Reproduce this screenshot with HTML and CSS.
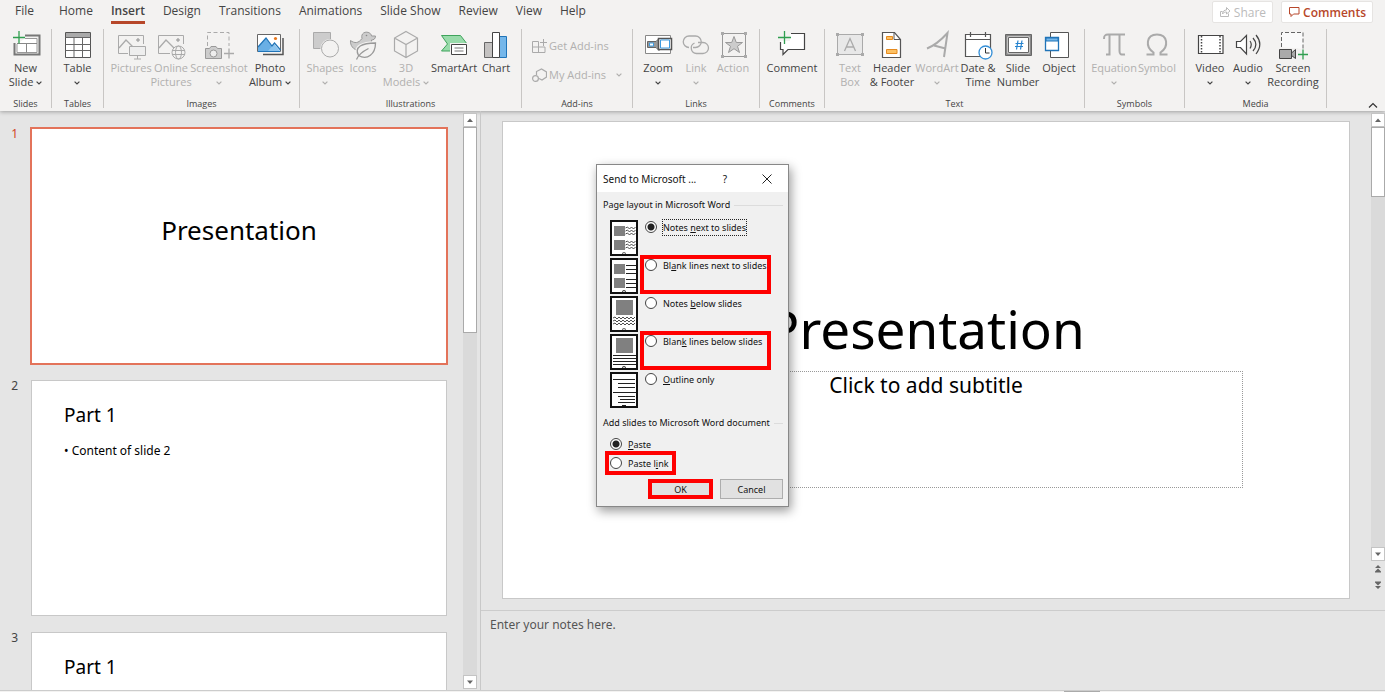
FILE: index.html
```html
<!DOCTYPE html>
<html lang="en">
<head>
<meta charset="utf-8">
<title>Presentation</title>
<link rel="stylesheet" href="styles.css">
</head>
<body>
<svg class="defs" aria-hidden="true">
  <symbol id="chev" viewBox="0 0 6 4"><path d="M.6.6 3 3 5.4.6" fill="none" stroke="currentColor" stroke-width="1.2"/></symbol>
  <symbol id="up" viewBox="0 0 8 8"><path d="M1 6h6L4 2.500z" fill="#666"/></symbol>
  <symbol id="down" viewBox="0 0 8 8"><path d="M1 2.500h6L4 6z" fill="#666"/></symbol>
</svg>

<header class="ribbon">
  <nav class="tabs">
    <button class="tab file">File</button>
    <button class="tab">Home</button>
    <button class="tab active">Insert</button>
    <button class="tab">Design</button>
    <button class="tab">Transitions</button>
    <button class="tab">Animations</button>
    <button class="tab">Slide Show</button>
    <button class="tab">Review</button>
    <button class="tab">View</button>
    <button class="tab">Help</button>
    <div class="tab-actions">
      <button class="pill muted"><svg width="12" height="12" viewBox="0 0 12 12" fill="none" stroke="currentColor"><path d="M3.500 5.500H1.500v5h8V7.500M3.500 8c0-3 2-4 4-4V1.500L11 5 7.500 8V6c-2 0-3 .5-4 2z"/></svg>Share</button>
      <button class="pill red"><svg width="12" height="12" viewBox="0 0 12 12" fill="none" stroke="currentColor"><path d="M1.500 1.500h9.500v6.500H5.500L3 10.500V8H1.500z"/></svg>Comments</button>
    </div>
  </nav>

  <div class="groups">
    <section class="group g-slides">
      <div class="tools">
        <button class="tool"><svg width="30" height="30" viewBox="0 0 30 30" fill="none"><path d="M14 5.500h14.500v19h-25V13" stroke="#777" stroke-width="2"/><path d="M14 8.500h12v14H6V14" stroke="#999" fill="#fff"/><path d="M6 13.500h20M15.500 13.500v9" stroke="#888"/><path d="M2 7.500h12M8 1v12.500" stroke="#2f9e4f" stroke-width="1.300"/></svg>
          <span>New<br>Slide <svg class="chev"><use href="#chev"/></svg></span></button>
      </div>
      <h2>Slides</h2>
    </section>

    <section class="group g-tables">
      <div class="tools">
        <button class="tool"><svg width="30" height="30" viewBox="0 0 30 30" fill="none"><path d="M2.500 2.500h25v25h-25z" fill="#fff" stroke="#555"/><path d="M3 3h24v4H3z" fill="#aaa"/><path d="M2.500 7.500h25M2.500 14.500h25M2.500 20.500h25M11 7.500v20M19.500 7.500v20" stroke="#666"/></svg>
          <span>Table<br><svg class="chev"><use href="#chev"/></svg></span></button>
      </div>
      <h2>Tables</h2>
    </section>

    <section class="group g-images">
      <div class="tools">
        <button class="tool off"><svg width="30" height="30" viewBox="0 0 30 30" fill="none" stroke="#aaa"><path d="M12 23.500H2.500V5.500h25V14"/><path d="M3 18l7-8 7 7" stroke-width="1.300"/><circle cx="22" cy="10" r="1.300" fill="#aaa"/><path d="M13.500 16.500h16v9h-16zM21.500 26v3M18 29h7" fill="#eee"/></svg>
          <span>Pictures</span></button>
        <button class="tool off"><svg width="30" height="30" viewBox="0 0 30 30" fill="none" stroke="#aaa"><path d="M14 23.500H2.500V5.500h25V14"/><path d="M3 18l7-8 8 8" stroke-width="1.300"/><circle cx="22" cy="10" r="1.300" fill="#aaa"/><circle cx="22.500" cy="22.500" r="6.500" fill="#f3f2f1"/><ellipse cx="22.500" cy="22.500" rx="3" ry="6.500"/><path d="M16 20.500h13M16 24.500h13"/></svg>
          <span>Online<br>Pictures</span></button>
        <button class="tool off"><svg width="30" height="30" viewBox="0 0 30 30" fill="none" stroke="#aaa"><path d="M3.500 16V2.500h21.500V16" stroke-dasharray="4 2.500"/><path d="M1.500 18.500h4l1.500-2h5l1.500 2h4v10h-16z" fill="#ccc" stroke="#999"/><circle cx="9.500" cy="23.500" r="3.500" fill="#eee" stroke="#999"/><path d="M20 23.500h10M25 18.500v10" stroke-width="1.300"/></svg>
          <span>Screenshot<br><svg class="chev"><use href="#chev"/></svg></span></button>
        <button class="tool"><svg width="30" height="30" viewBox="0 0 30 30" fill="none"><path d="M28 8v16.500H8" stroke="#555" stroke-width="1.500"/><path d="M2.500 4.500h23v17h-23z" fill="#fff" stroke="#666"/><path d="M3 17l8-9 9 13H3z" fill="#69afe5"/><path d="M13 21l6-7 6.500 7.500z" fill="#8cc4ee"/><path d="M3 17l8-9 6 8 2.500-3 6 7M3 21.500h22" stroke="#2074b8" stroke-width="1.200"/><circle cx="20.500" cy="8.500" r="1.600" fill="#e8761b"/></svg>
          <span>Photo<br>Album <svg class="chev"><use href="#chev"/></svg></span></button>
      </div>
      <h2>Images</h2>
    </section>

    <section class="group g-illus">
      <div class="tools">
        <button class="tool off"><svg width="30" height="30" viewBox="0 0 30 30" fill="none" stroke="#aaa"><path d="M3.500 2.500h17v16h-17z" fill="#ccc"/><circle cx="20" cy="18.500" r="9.500" fill="#f3f2f1" stroke="none"/><circle cx="20" cy="18.500" r="8.500" fill="#f3f2f1"/></svg>
          <span>Shapes<br><svg class="chev"><use href="#chev"/></svg></span></button>
        <button class="tool off"><svg width="30" height="30" viewBox="0 0 30 30" fill="none" stroke="#aaa"><path d="M14 8.500c-2-8 9-8 9.500-2.500h4c0 3-2 4-4 4 0 4 0 6-3 8.500L11 20.500C5 20 2 15 2.500 10.500c4 3 8 3 11.500-2z" fill="#ccc" stroke="#999"/><circle cx="18.500" cy="5.500" r=".8" fill="#888" stroke="none"/><path d="M10.500 25.500C6 17 14 13 27.500 13c0 11-8 17.500-17 12.500z" fill="#f3f2f1" stroke="#f3f2f1" stroke-width="3.500"/><path d="M10.500 25.500C6 17 14 13 27.500 13c0 11-8 17.500-17 12.500z" fill="#f3f2f1" stroke="#999" stroke-width="1.300"/><path d="M8.500 29.500c2-5 6-8 12-11" stroke="#999" stroke-width="1.300"/></svg>
          <span>Icons</span></button>
        <button class="tool off"><svg width="30" height="30" viewBox="0 0 30 30" fill="none" stroke="#aaa" stroke-width="1.200"><path d="M15 1.500 26.500 8v13L15 27.500 3.500 21V8zM3.500 8 15 14.500 26.500 8M15 14.500v13"/></svg>
          <span>3D<br>Models <svg class="chev"><use href="#chev"/></svg></span></button>
        <button class="tool"><svg width="30" height="30" viewBox="0 0 30 30" fill="none"><path d="M2.500 5.500h19l7 9-6.500 6.500H2.500l6-7z" fill="#98dbaa" stroke="#3fa35c"/><path d="M11 13h18v13H11z" fill="#f3f2f1"/><path d="M12.500 14.500h15v10h-15z" fill="#fff" stroke="#444"/><path d="M15.500 18h9M15.500 21h9" stroke="#777"/></svg>
          <span>SmartArt</span></button>
        <button class="tool"><svg width="30" height="30" viewBox="0 0 30 30"><path d="M3.500 12.500h8v15h-8z" fill="#c4c2c1" stroke="#666"/><path d="M18.500 6.500h7v21h-7z" fill="#75b7ea" stroke="#2074b8"/><path d="M11.500 2.500h7v25h-7z" fill="#fff" stroke="#444"/></svg>
          <span>Chart</span></button>
      </div>
      <h2>Illustrations</h2>
    </section>

    <section class="group g-addins">
      <div class="tools stacked">
        <button class="inline off"><svg width="15" height="15" viewBox="0 0 15 15" fill="none" stroke="#aaa"><path d="M6.500 2.500h-6v11h12.500V8H.5M6.500 2.500v11M11.500 0v7M8 3.500h7"/></svg>Get Add-ins</button>
        <button class="inline off"><svg width="15" height="15" viewBox="0 0 15 15" fill="none" stroke="#aaa" stroke-width="1.200"><path d="M4.500 7V3.500L9.500 1l5 3v5l-4.500 3-3-1.500"/><circle cx="3.500" cy="10.500" r="2.900"/></svg>My Add-ins <svg class="chev"><use href="#chev"/></svg></button>
      </div>
      <h2>Add-ins</h2>
    </section>

    <section class="group g-links">
      <div class="tools">
        <button class="tool"><svg width="30" height="30" viewBox="0 0 30 30" fill="none"><path d="M2.500 5.500h25v18h-25z" fill="#fff" stroke="#888"/><path d="M4.500 11.500H13l3-3v12l-3-3H4.500z" fill="#999" stroke="#666"/><path d="M15.500 8.500h13v11h-13z" fill="#fff" stroke="#555" stroke-width="1.500"/><path d="M6.500 13h4v3h-4zM17.500 10h9v8h-9z" fill="#fff" stroke="#3d9be0"/></svg>
          <span>Zoom<br><svg class="chev"><use href="#chev"/></svg></span></button>
        <button class="tool off"><svg width="30" height="30" viewBox="0 0 30 30" fill="none" stroke="#aaa" stroke-width="1.300"><path d="M8 17.500a5.700 5.700 0 0 1 0-11.500h6.500a5.700 5.700 0 0 1 0 11.500h-2.500"/><path d="M17 12.500h5a5.500 5.500 0 0 1 0 11h-6.500a5.500 5.500 0 0 1-2-10.500"/></svg>
          <span>Link<br><svg class="chev"><use href="#chev"/></svg></span></button>
        <button class="tool off"><svg width="30" height="30" viewBox="0 0 30 30" fill="none" stroke="#999"><path d="M4.500 3.500h23v23h-23z"/><path d="M3 2h3v3H3zM26 2h3v3h-3zM3 25h3v3H3zM26 25h3v3h-3z" fill="#aaa" stroke="none"/><path d="M16 6.500l2.300 6h6.200l-5 3.800 2 6.200-5.500-3.800-5.500 3.800 2-6.200-5-3.800h6.200z" fill="#ccc"/></svg>
          <span>Action</span></button>
      </div>
      <h2>Links</h2>
    </section>

    <section class="group g-comments">
      <div class="tools">
        <button class="tool"><svg width="30" height="30" viewBox="0 0 30 30" fill="none"><path d="M14 3.500h13.500v16H11l-5 5v-5H3.500V12" fill="#fff" stroke="#444" stroke-width="1.200"/><path d="M3 2h10v9H3z" fill="#f3f2f1"/><path d="M1 7.500h13M7.500 1v13" stroke="#2f9e4f" stroke-width="1.300"/></svg>
          <span>Comment</span></button>
      </div>
      <h2>Comments</h2>
    </section>

    <section class="group g-text">
      <div class="tools">
        <button class="tool off"><svg width="30" height="30" viewBox="0 0 30 30" fill="none" stroke="#aaa"><path d="M2.500 4.500h25v20h-25z" fill="#e8e8e8"/><path d="M1 3h3v3H1zM26 3h3v3h-3zM1 23h3v3H1zM26 23h3v3h-3z" fill="#aaa" stroke="none"/><path d="M9.500 21 15 8.500 20.500 21M11.500 17h7" stroke-width="1.300"/></svg>
          <span>Text<br>Box</span></button>
        <button class="tool"><svg width="30" height="30" viewBox="0 0 30 30" fill="none"><path d="M5.500 2.500h12l6 7v18h-18z" fill="#fff" stroke="#555" stroke-width="1.200"/><path d="M17 2.500v7h6.500" stroke="#555"/><path d="M9.500 6.500h6v3h-6zM9.500 19.500h10.500v4H9.500z" fill="#fcc165" stroke="#e58a1f"/></svg>
          <span>Header<br>&amp; Footer</span></button>
        <button class="tool off"><svg width="30" height="30" viewBox="0 0 30 30" fill="none" stroke="#aaa" stroke-width="2"><path d="M5 18.500C14 15 20 9 25.500 3L22 27M12 15.500l11.500 3"/></svg>
          <span>WordArt<br><svg class="chev"><use href="#chev"/></svg></span></button>
        <button class="tool"><svg width="30" height="30" viewBox="0 0 30 30" fill="none"><path d="M2.500 4.500h25v22h-25z" fill="#fff" stroke="#555" stroke-width="1.200"/><path d="M2.500 9.500h25M7.500 2v5M22.500 2v5" stroke="#555" stroke-width="1.200"/><circle cx="22.500" cy="22.500" r="6.500" fill="#fff" stroke="#3590d8" stroke-width="1.300"/><path d="M22.500 18v5h4" stroke="#333"/></svg>
          <span>Date &amp;<br>Time</span></button>
        <button class="tool"><svg width="30" height="30" viewBox="0 0 30 30" fill="none"><path d="M3.500 5.500h24v19h-24z" fill="#fff" stroke="#888" stroke-width="2"/><path d="M2.500 4.500h26v21h-26zM5.500 7.500h20v15h-20z" stroke="#666"/><path d="M15 10.500l-1.500 9M19 10.500l-1.500 9M12.500 13.500h8M12 16.500h8" stroke="#2683cf" stroke-width="1.200"/></svg>
          <span>Slide<br>Number</span></button>
        <button class="tool"><svg width="30" height="30" viewBox="0 0 30 30"><path d="M6.500 2.500h18v25h-18z" fill="#fff" stroke="#555"/><path d="M1.500 7.500h13v13h-13z" fill="#fff" stroke="#2074b8" stroke-width="1.300"/><path d="M2 8h12v3H2z" fill="#75b7ea" stroke="#2074b8"/></svg>
          <span>Object</span></button>
      </div>
      <h2>Text</h2>
    </section>

    <section class="group g-symbols">
      <div class="tools">
        <button class="tool off"><svg width="30" height="30" viewBox="0 0 30 30" fill="none" stroke="#aaa" stroke-width="2"><path d="M5 9c0-3.500 1-4.500 4-4.500h17M10.500 5v19.500H7M20.500 5v16c0 3 1 4 5.500 3.500"/></svg>
          <span>Equation<br><svg class="chev"><use href="#chev"/></svg></span></button>
        <button class="tool off"><svg width="30" height="30" viewBox="0 0 30 30" fill="none" stroke="#aaa" stroke-width="2"><path d="M4.500 24.500h7v-2C3 17 4 4.500 15 4.500S27 17 18.500 22.500v2h7"/></svg>
          <span>Symbol</span></button>
      </div>
      <h2>Symbols</h2>
    </section>

    <section class="group g-media">
      <div class="tools">
        <button class="tool"><svg width="30" height="30" viewBox="0 0 30 30" fill="none"><path d="M3.500 5.500h24.500v18H3.500z" fill="#fff" stroke="#444" stroke-width="1.200"/><path d="M6.500 6v18M25 6v18" stroke="#444" stroke-width="1.500" stroke-dasharray="1.500 1.500"/></svg>
          <span>Video<br><svg class="chev"><use href="#chev"/></svg></span></button>
        <button class="tool"><svg width="30" height="30" viewBox="0 0 30 30" fill="none" stroke="#444" stroke-width="1.200"><path d="M3.500 11.500h4l6-6v18.500l-6-6.500h-4z" fill="#fff"/><path d="M17 11c1.500 2 1.500 5 0 7.500M20 8c3.500 4 3.500 9 0 13M23 5c5 6 5 12.500 0 19"/></svg>
          <span>Audio<br><svg class="chev"><use href="#chev"/></svg></span></button>
        <button class="tool"><svg width="30" height="30" viewBox="0 0 30 30" fill="none"><path d="M3.500 17V2.500h21.500V19" fill="#fafafa" stroke="#666" stroke-dasharray="4 2"/><path d="M1 18h19v11H1z" fill="#f3f2f1"/><path d="M1.500 19.500h12v9h-12zM13.500 23l4-3.500v9l-4-3z" fill="#aaa" stroke="#444"/><path d="M20 24.500h10M25 19.500v10" stroke="#2f9e4f" stroke-width="1.300"/></svg>
          <span>Screen<br>Recording</span></button>
      </div>
      <h2>Media</h2>
    </section>
    <button class="collapse" aria-label="Collapse the ribbon"><svg width="10" height="6" viewBox="0 0 10 6"><path d="M1 5.500 5 1.500 9 5.500" fill="none" stroke="#333" stroke-width="1.200"/></svg></button>
  </div>
</header>

<main class="workspace">
  <aside class="outline">
    <ol class="thumbs">
      <li class="selected"><span class="num">1</span><div class="thumb title-thumb"><h3>Presentation</h3></div></li>
      <li><span class="num">2</span><div class="thumb"><h4>Part 1</h4><p>• Content of slide 2</p></div></li>
      <li><span class="num">3</span><div class="thumb"><h4>Part 1</h4></div></li>
    </ol>
    <div class="scrollbar">
      <button aria-label="Scroll slides up"><svg width="8" height="8"><use href="#up"/></svg></button>
      <div class="track"><div class="grip long"></div></div>
      <button aria-label="Scroll slides down"><svg width="8" height="8"><use href="#down"/></svg></button>
    </div>
  </aside>

  <div class="editor">
    <div class="stage">
      <article class="slide">
        <h1>Presentation</h1>
        <div class="subtitle">Click to add subtitle</div>
      </article>
      <div class="scrollbar side">
        <button aria-label="Scroll up"><svg width="8" height="8"><use href="#up"/></svg></button>
        <div class="track"><div class="grip"></div></div>
        <button aria-label="Scroll down"><svg width="8" height="8"><use href="#down"/></svg></button>
        <button class="bare" aria-label="Previous slide"><svg width="8" height="8" viewBox="0 0 8 8"><path d="M4 0l3 3H1zM4 3.500l3 3v1H1v-1z" fill="#666"/></svg></button>
        <button class="bare" aria-label="Next slide"><svg width="8" height="8" viewBox="0 0 8 8"><path d="M4 8l3-3H1zM4 4.500l3-3v-1H1v1z" fill="#666"/></svg></button>
      </div>
    </div>
    <div class="notes">Enter your notes here.</div>
  </div>

  <form class="dialog" role="dialog" aria-label="Send to Microsoft Word">
    <div class="titlebar">
      <span class="caption">Send to Microsoft ...</span>
      <button type="button" aria-label="Help">?</button>
      <button type="button" aria-label="Close"><svg width="10" height="10" viewBox="0 0 10 10"><path d="M.5.5l9 9M9.500.5l-9 9" stroke="#222"/></svg></button>
    </div>
    <div class="body">
      <div class="legend"><span>Page layout in Microsoft Word</span></div>
      <div class="layouts">
        <div class="option">
          <svg width="28" height="36" viewBox="0 0 28 36"><path d="M1 1h26v34H1z" fill="#fff" stroke="#111" stroke-width="2"/><path d="M4 6h11v10H4zM4 20h11v10H4z" fill="#808080"/><path d="M15.500 8l2-1 2 2 2-2 2 2 2-2M15.500 11l2-1 2 2 2-2 2 2 2-2M15.500 14l2-1 2 2 2-2 2 2 2-2M15.500 22l2-1 2 2 2-2 2 2 2-2M15.500 25l2-1 2 2 2-2 2 2 2-2M15.500 28l2-1 2 2 2-2 2 2 2-2M12 33.500l2-1 2 1" fill="none" stroke="#222" stroke-width=".8"/></svg>
          <label><input type="radio" name="layout" checked><span class="focus">Notes <u>n</u>ext to slides</span></label>
        </div>
        <div class="option marked">
          <svg width="28" height="36" viewBox="0 0 28 36"><path d="M1 1h26v34H1z" fill="#fff" stroke="#111" stroke-width="2"/><path d="M4 6h11v10H4zM4 20h11v10H4z" fill="#808080"/><path d="M16 7.500h10M16 11.500h10M16 15.500h10M16 21.500h10M16 25.500h10M16 29.500h10M12 33.500l2-1 2 1" fill="none" stroke="#222"/></svg>
          <label><input type="radio" name="layout"><span>Bl<u>a</u>nk lines next to slides</span></label>
        </div>
        <div class="option">
          <svg width="28" height="36" viewBox="0 0 28 36"><path d="M1 1h26v34H1z" fill="#fff" stroke="#111" stroke-width="2"/><path d="M6 4h17v15H6z" fill="#808080"/><path d="M3 22l2-1 2 2 2-2 2 2 2-2 2 2 2-2 2 2 2-2 2 2 2-2M3 25l2-1 2 2 2-2 2 2 2-2 2 2 2-2 2 2 2-2 2 2 2-2M3 28l2-1 2 2 2-2 2 2 2-2 2 2 2-2 2 2 2-2 2 2 2-2M12 33.500l2-1 2 1" fill="none" stroke="#222" stroke-width=".8"/></svg>
          <label><input type="radio" name="layout"><span>Notes <u>b</u>elow slides</span></label>
        </div>
        <div class="option marked">
          <svg width="28" height="36" viewBox="0 0 28 36"><path d="M1 1h26v34H1z" fill="#fff" stroke="#111" stroke-width="2"/><path d="M6 4h17v15H6z" fill="#808080"/><path d="M3 21.500h23M3 24.500h23M3 27.500h23M3 30.500h23M12 33.500l2-1 2 1" fill="none" stroke="#222"/></svg>
          <label><input type="radio" name="layout"><span>Blan<u>k</u> lines below slides</span></label>
        </div>
        <div class="option">
          <svg width="28" height="36" viewBox="0 0 28 36"><path d="M1 1h26v34H1z" fill="#fff" stroke="#111" stroke-width="2"/><path d="M3 7.500h22M8 11.500h17M8 15.500h17M3 20.500h23M8 24.500h17M10 27.500h15M8 30.500h17M12 33.500h4" stroke="#222"/></svg>
          <label><input type="radio" name="layout"><span><u>O</u>utline only</span></label>
        </div>
      </div>
      <div class="legend second"><span>Add slides to Microsoft Word document</span></div>
      <div class="paste">
        <label><input type="radio" name="paste" checked><span><u>P</u>aste</span></label>
        <label class="marked"><input type="radio" name="paste"><span>Paste l<u>i</u>nk</span></label>
      </div>
      <div class="actions">
        <button type="button" class="marked">OK</button>
        <button type="button">Cancel</button>
      </div>
    </div>
  </form>
</main>
<footer class="statusbar"><div class="knob"></div></footer>
</body>
</html>
```
FILE: styles.css
```css
* { box-sizing: border-box; }
body {
  margin: 0;
  height: 100vh;
  display: flex;
  flex-direction: column;
  overflow: hidden;
  background: #e5e5e5;
  color: #444;
  font-family: "Noto Sans", "Open Sans", sans-serif;
  font-size: 11px;
}
button { font: inherit; color: inherit; background: none; border: 0; padding: 0; margin: 0; }
h1, h2, h3, h4, p, ol { margin: 0; padding: 0; font-weight: 400; }
.defs { display: none; }

/* Ribbon */
.ribbon {
  flex: none;
  position: relative;
  background: #f3f2f1;
  box-shadow: 0 1px 4px rgba(0, 0, 0, .3);
  font-family: "Open Sans", "Noto Sans", sans-serif;
}
.tabs { display: flex; height: 24px; padding-left: 15px; gap: 18px; font-size: 12px; }
.tab { height: 24px; line-height: 22px; border-bottom: 3px solid transparent; white-space: nowrap; }
.tab.file { margin-right: 7px; }
.tab.active { font-weight: 600; border-color: #b7472a; }
.tab-actions { display: flex; gap: 8px; margin-left: auto; padding: 1px 12px 1px 0; }
.pill {
  display: flex;
  align-items: center;
  gap: 3px;
  padding: 0 6px;
  background: #fff;
  border: 1px solid #e6e4e2;
  border-radius: 2px;
}
.pill.muted { color: #bbb; }
.pill.red { color: #b7472a; font-weight: 600; }

.groups { display: flex; height: 87px; padding-top: 5px; }
.group {
  height: 79px;
  flex: none;
  display: flex;
  flex-direction: column;
  justify-content: space-between;
  border-right: 1px solid #c8c6c4;
}
.group h2 { font-size: 9px; line-height: 8px; text-align: center; }
.tools { display: grid; }
.tool { display: flex; flex-direction: column; align-items: center; gap: 1px; padding-top: 1px; line-height: 14px; white-space: nowrap; }
.tool > svg { flex: none; }
.off { color: #b1b0af; }
.chev { width: 6px; height: 4px; vertical-align: middle; }
.g-slides, .g-tables { width: 52px; }
.g-images { width: 196px; }
.g-images .tools { grid-template-columns: 38px 42px 54px 48px; padding-left: 8px; }
.g-illus { width: 222px; }
.g-illus .tools { grid-template-columns: 38px 38px 48px 48px 36px; padding-left: 6px; }
.g-addins { width: 111px; }
.stacked { padding: 9px 0 0 10px; gap: 13px; justify-items: start; }
.inline { display: flex; align-items: center; gap: 2px; line-height: 16px; white-space: nowrap; }
.inline .chev { margin-left: 8px; }
.g-links { width: 127px; }
.g-links .tools { grid-template-columns: 38px 38px 36px; padding-left: 6px; }
.g-comments { width: 65px; }
.g-text { width: 260px; }
.g-text .tools { grid-template-columns: 34px 50px 40px 42px 38px 44px; padding-left: 8px; }
.g-symbols { width: 100px; }
.g-symbols .tools { grid-template-columns: 44px 42px; padding-left: 7px; }
.g-media { width: 142px; }
.g-media .tools { grid-template-columns: 38px 38px 52px; padding-left: 6px; }
.collapse { margin: auto 7px 3px auto; line-height: 6px; display: flex; }

/* Workspace */
.workspace { flex: 1; min-height: 0; position: relative; display: grid; grid-template-columns: 481px 1fr; }
.outline { display: flex; min-height: 0; padding: 2px 3px 1px 0; border-right: 1px solid #c8c8c8; overflow: hidden; }
.thumbs { flex: 1; list-style: none; display: flex; flex-direction: column; gap: 16px; padding: 15px 16px 0 0; min-width: 0; }
.thumbs li { display: flex; flex: none; }
.num { width: 31px; padding-right: 13px; text-align: right; font-size: 12px; line-height: 11px; }
.thumb { flex: 1; aspect-ratio: 416 / 236; background: #fff; border: 1px solid #c8c8c8; padding: 20px 32px; color: #000; }
.thumb h4 { font-size: 19px; line-height: 28px; }
.thumb p { font-size: 12px; line-height: 16px; margin-top: 14px; }
.title-thumb { display: flex; justify-content: center; align-items: flex-start; padding-top: 83px; }
.title-thumb h3 { font-size: 26px; line-height: 36px; }
.selected .thumb { border-color: #e3735a; box-shadow: 0 0 0 1px #e3735a; }
.selected .num { color: #d24726; }

.scrollbar { width: 14px; flex: none; display: flex; flex-direction: column; }
.scrollbar button { height: 14px; display: flex; align-items: center; justify-content: center; background: #fff; border: 1px solid #c4c4c4; }
.scrollbar button.bare { background: none; border: 0; height: 16px; }
.track { flex: 1; background: #dadada; }
.grip { height: 70px; background: #fff; border: 1px solid #aaa; }
.grip.long { height: 206px; }

.editor { display: flex; flex-direction: column; min-width: 0; }
.stage { flex: 1; min-height: 0; display: flex; align-items: flex-start; padding-left: 21px; gap: 21px; }
.slide {
  flex: 1;
  aspect-ratio: 848 / 478;
  margin-top: 10px;
  background: #fff;
  border: 1px solid #c8c8c8;
  color: #000;
  display: flex;
  flex-direction: column;
  align-items: center;
  padding-top: 169px;
}
.slide h1 { font-size: 53px; line-height: 76px; }
.subtitle { width: 75%; height: 117px; margin-top: 4px; border: 1px dotted #999; text-align: center; font-size: 21px; line-height: 26px; }
.side { align-self: stretch; padding: 2px 0 17px; }
.notes { flex: none; height: 80px; border-top: 1px solid #ccc; padding: 5px 9px; font-size: 12px; line-height: 17px; color: #555; }

/* Dialog */
.dialog {
  position: absolute;
  left: 596px;
  top: 53px;
  width: 193px;
  background: #f0f0f0;
  border: 1px solid #888;
  box-shadow: 2px 4px 10px rgba(0, 0, 0, .4);
  color: #111;
  font-size: 9px;
}
.titlebar { display: flex; height: 27px; align-items: center; background: #fff; padding-left: 6px; font-size: 10px; }
.caption { flex: 1; white-space: nowrap; }
.titlebar button { width: 42px; height: 27px; display: flex; align-items: center; justify-content: center; }
.body { padding: 7px 5px 7px 6px; }
.legend { display: flex; align-items: center; gap: 4px; line-height: 12px; white-space: nowrap; }
.legend::after { content: ""; flex: 1; border-top: 1px solid #dcdcdc; }
.layouts { display: flex; flex-direction: column; gap: 2px; padding: 9px 0 0 7px; }
.option { display: flex; gap: 7px; height: 36px; position: relative; }
label { display: flex; align-items: center; gap: 6px; height: 14px; line-height: 14px; white-space: nowrap; position: relative; }
label span { padding-top: 1px; }
.focus { outline: 1px dotted #222; }
input[type="radio"] {
  appearance: none;
  flex: none;
  width: 12px;
  height: 12px;
  margin: 0;
  border: 1px solid #444;
  border-radius: 50%;
  background: #fff;
}
input[type="radio"]:checked { background: radial-gradient(circle, #222 3px, #fff 4px); }
.marked::after { content: ""; position: absolute; border: 4px solid #f00; pointer-events: none; }
.option.marked::after { inset: -3px 12px 0 30px; }
.second { margin-top: 9px; }
.paste { display: flex; flex-direction: column; align-items: flex-start; gap: 5px; padding: 8px 0 0 7px; }
.paste .marked::after { inset: -5px -7px -5px -5px; }
.actions { display: flex; justify-content: flex-end; gap: 8px; padding-top: 9px; }
.actions button { width: 63px; height: 20px; background: #e1e1e1; border: 1px solid #adadad; position: relative; }
.actions .marked::after { inset: -1px -2px; }

.statusbar { flex: none; height: 2px; background: #f3f2f1; border-top: 1px solid #ccc; position: relative; }
.knob { position: absolute; right: 285px; top: 0; width: 36px; height: 1px; background: #aaa; }
```
